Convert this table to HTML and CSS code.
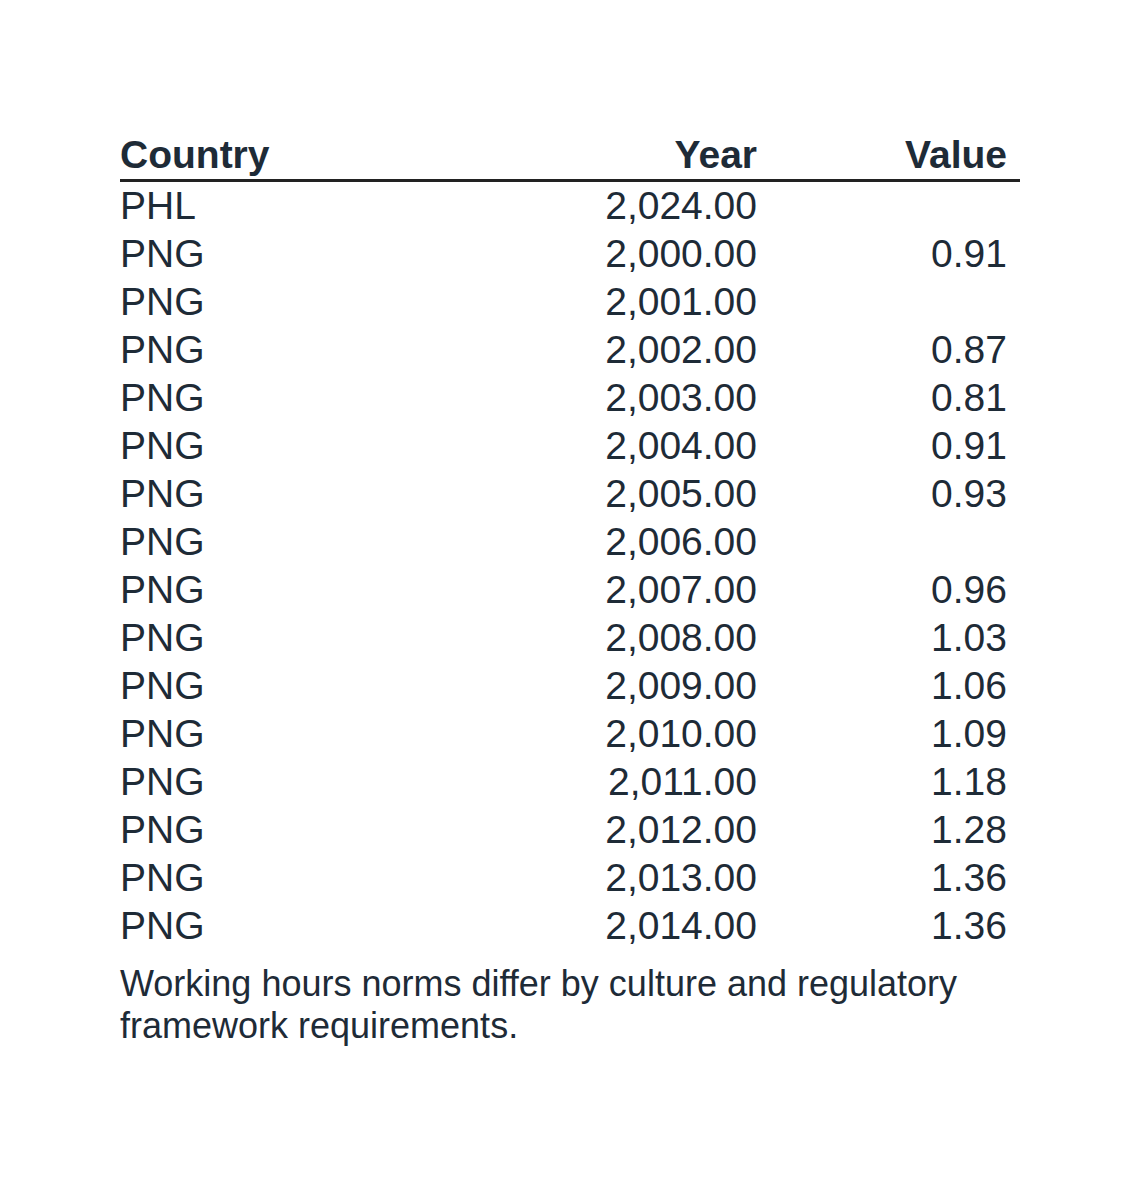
FILE: index.html
```html
<!DOCTYPE html>
<html>
<head>
<meta charset="utf-8">
<link rel="stylesheet" href="styles.css">
</head>
<body>
<div class="page">
  <table class="data">
    <thead>
      <tr><th class="c-country">Country</th><th class="c-year">Year</th><th class="c-value">Value</th></tr>
    </thead>
    <tbody>
      <tr><td>PHL</td><td class="num">2,024.00</td><td class="num val"></td></tr>
      <tr><td>PNG</td><td class="num">2,000.00</td><td class="num val">0.91</td></tr>
      <tr><td>PNG</td><td class="num">2,001.00</td><td class="num val"></td></tr>
      <tr><td>PNG</td><td class="num">2,002.00</td><td class="num val">0.87</td></tr>
      <tr><td>PNG</td><td class="num">2,003.00</td><td class="num val">0.81</td></tr>
      <tr><td>PNG</td><td class="num">2,004.00</td><td class="num val">0.91</td></tr>
      <tr><td>PNG</td><td class="num">2,005.00</td><td class="num val">0.93</td></tr>
      <tr><td>PNG</td><td class="num">2,006.00</td><td class="num val"></td></tr>
      <tr><td>PNG</td><td class="num">2,007.00</td><td class="num val">0.96</td></tr>
      <tr><td>PNG</td><td class="num">2,008.00</td><td class="num val">1.03</td></tr>
      <tr><td>PNG</td><td class="num">2,009.00</td><td class="num val">1.06</td></tr>
      <tr><td>PNG</td><td class="num">2,010.00</td><td class="num val">1.09</td></tr>
      <tr><td>PNG</td><td class="num">2,011.00</td><td class="num val">1.18</td></tr>
      <tr><td>PNG</td><td class="num">2,012.00</td><td class="num val">1.28</td></tr>
      <tr><td>PNG</td><td class="num">2,013.00</td><td class="num val">1.36</td></tr>
      <tr><td>PNG</td><td class="num">2,014.00</td><td class="num val">1.36</td></tr>
    </tbody>
  </table>
  <p class="note">Working hours norms differ by culture and regulatory framework requirements.</p>
</div>
</body>
</html>
```
FILE: styles.css
```css
html, body {
  margin: 0;
  padding: 0;
  background: #ffffff;
}
body {
  font-family: "Liberation Sans", Arial, sans-serif;
  color: #1e2b37;
}
.page {
  padding: 131px 0 0 120px;
  width: 900px;
}
.data {
  width: 900px;
  border-collapse: collapse;
  table-layout: fixed;
  font-size: 39px;
}
.data th, .data td {
  padding: 0;
  height: 48px;
  line-height: 48px;
  white-space: nowrap;
}
.data th {
  font-weight: bold;
  border-bottom: 3px solid #222222;
}
.c-country {
  text-align: left;
  width: 387px;
}
.c-year {
  text-align: right;
  width: 250px;
}
.c-value {
  text-align: right;
  width: 263px;
  box-sizing: border-box;
}
.data th.c-value {
  padding-right: 13px;
}
.num {
  text-align: right;
}
.data td.val {
  padding-right: 13px;
}
.note {
  margin: 13px 0 0 0;
  font-size: 36px;
  line-height: 42px;
  width: 900px;
}
```
